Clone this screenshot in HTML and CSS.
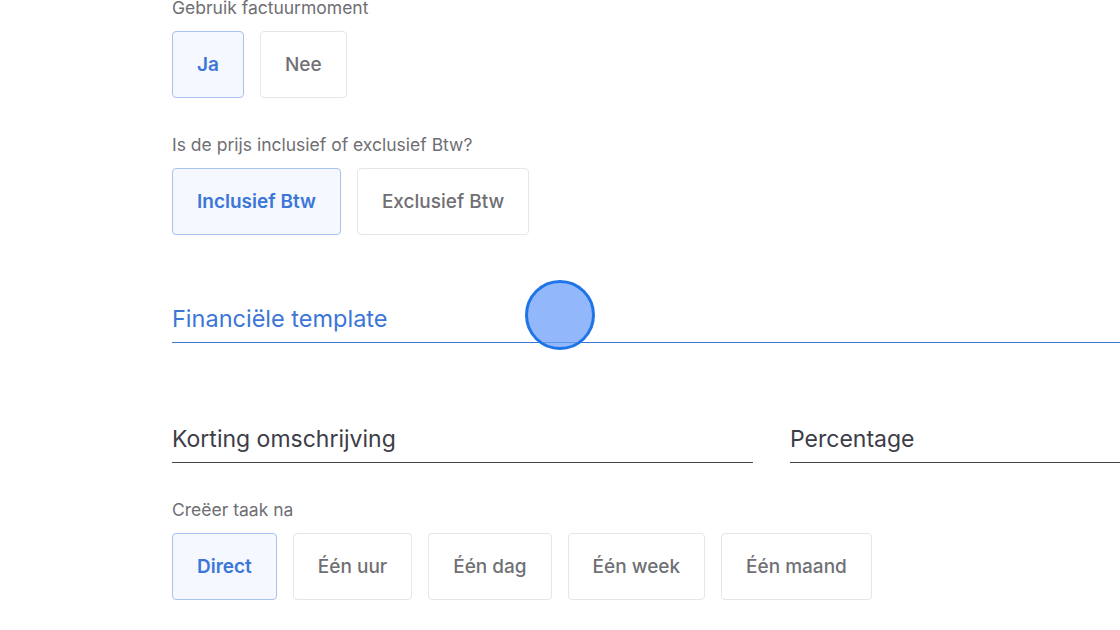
FILE: index.html
```html
<!DOCTYPE html>
<html lang="nl">
<head>
    <meta charset="UTF-8">
    <meta name="viewport" content="width=device-width, initial-scale=1.0">
    <title>Financiële instellingen</title>
    <link rel="stylesheet" href="styles.css">
</head>
<body>
    <div class="form">
        <!-- Factuurmoment -->
        <div class="field-group">
            <div class="field-label">Gebruik factuurmoment</div>
            <div class="choice-row">
                <button class="choice choice-active">Ja</button>
                <button class="choice">Nee</button>
            </div>
        </div>

        <!-- Btw -->
        <div class="field-group">
            <div class="field-label">Is de prijs inclusief of exclusief Btw?</div>
            <div class="choice-row">
                <button class="choice choice-active">Inclusief Btw</button>
                <button class="choice">Exclusief Btw</button>
            </div>
        </div>

        <!-- Template -->
        <div class="section-title">Financiële template</div>

        <div class="input-row">
            <div class="text-input">Korting omschrijving</div>
            <div class="text-input">Percentage</div>
        </div>

        <!-- Taak -->
        <div class="field-group">
            <div class="field-label">Creëer taak na</div>
            <div class="choice-row">
                <button class="choice choice-active">Direct</button>
                <button class="choice">Één uur</button>
                <button class="choice">Één dag</button>
                <button class="choice">Één week</button>
                <button class="choice">Één maand</button>
            </div>
        </div>
    </div>

    <!-- click indicator -->
    <div class="click-dot"></div>
</body>
</html>
```

FILE: styles.css
```css
* {
    margin: 0;
    padding: 0;
    box-sizing: border-box;
}

body {
    font-family: Inter, 'Noto Sans', sans-serif;
    background: #ffffff;
    overflow: hidden;
}

.form {
    padding-left: 172px;
    margin-top: -2px;
}

.field-group {
    margin-bottom: 37px;
}

.field-label {
    color: #6e6e73;
    font-size: 17.5px;
    line-height: 20px;
    margin-bottom: 13px;
}

.choice-row {
    display: flex;
    gap: 16px;
}

.choice {
    height: 67px;
    padding: 0 24px;
    background: #ffffff;
    border: 1px solid #e6e6e8;
    border-radius: 4px;
    color: #707074;
    font-family: inherit;
    font-size: 19px;
    font-weight: 500;
}

.choice-active {
    background: #f5f8fe;
    border-color: #a8c2ee;
    color: #3b76d8;
    font-weight: 600;
}

.section-title {
    margin-top: 69px;
    color: #3b76d8;
    font-size: 23.5px;
    line-height: 30px;
    padding-bottom: 8px;
    border-bottom: 1.5px solid #3b76d8;
}

.input-row {
    display: grid;
    grid-template-columns: 581px 1fr;
    gap: 37px;
    margin-top: 81px;
    margin-bottom: 37px;
}

.text-input {
    color: #3d3d47;
    font-size: 23px;
    line-height: 30px;
    padding-bottom: 8px;
    border-bottom: 1.5px solid #45454e;
}

.click-dot {
    position: absolute;
    left: 525px;
    top: 280px;
    width: 70px;
    height: 70px;
    border-radius: 50%;
    background: rgba(110, 160, 250, 0.75);
    border: 3px solid #1f74e8;
}
```
